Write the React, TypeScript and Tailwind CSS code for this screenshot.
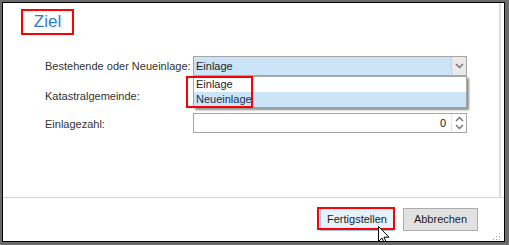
import React from "react";

const Chevron = ({ up = false }: { up?: boolean }) => (
  <svg width="9" height="6" viewBox="0 0 9 6" className="block">
    <path
      d={up ? "M1 5 L4.5 1.5 L8 5" : "M1 1 L4.5 4.5 L8 1"}
      fill="none"
      stroke="#707070"
      strokeWidth="1.4"
    />
  </svg>
);

export default function App() {
  return (
    <div
      className="w-[509px] h-[245px] bg-[#6b6b6b] pt-[2px] pl-[2px] pr-[4px] pb-[3px]"
      style={{ fontFamily: '"Liberation Sans", Arial, sans-serif' }}
    >
      <div className="relative h-full border border-black bg-white flex flex-col overflow-hidden">
        {/* top section */}
        <div className="relative h-[194px] mr-[3px] border-r-2 border-[#dedede]">
          <div className="ml-[18px] mt-[6px] w-[53px] h-[26px] border-2 border-[#ff0000] flex items-center justify-center">
            <span className="text-[17px] leading-none text-[#2d80c4] pb-[1px]">Ziel</span>
          </div>

          {/* form */}
          <div className="relative mt-[21px] ml-[42px] text-[11px] text-[#333]">
            {/* row 1 */}
            <div className="flex items-center h-[20px]">
              <div className="w-[148px]">Bestehende oder Neueinlage:</div>
              <div className="w-[274px] h-[20px] border border-[#a6a6a6] bg-[#cce4f7] flex">
                <div className="flex-1 pl-[2px] flex items-center text-[#1e1e1e]">Einlage</div>
                <div className="w-[15px] bg-[#e9e9e9] border-l border-[#cfcfcf] flex items-center justify-center">
                  <Chevron />
                </div>
              </div>
            </div>
            {/* row 2 */}
            <div className="flex items-center h-[20px] mt-[10px]">
              <div className="w-[148px]">Katastralgemeinde:</div>
              <div className="w-[274px] h-[20px] border border-[#a6a6a6] bg-white" />
            </div>
            {/* row 3 */}
            <div className="flex items-center h-[20px] mt-[7px]">
              <div className="w-[148px] pt-[2px]">Einlagezahl:</div>
              <div className="w-[274px] h-[20px] border border-[#a6a6a6] bg-white flex">
                <div className="flex-1 flex items-center justify-end pr-[5px] text-[#222]">0</div>
                <div className="w-[15px] border-l border-[#e3e3e3] flex flex-col items-center justify-center gap-[2px]">
                  <Chevron up />
                  <Chevron />
                </div>
              </div>
            </div>

            {/* dropdown list */}
            <div className="absolute left-[148px] top-[20px] w-[274px] border border-[#a6a6a6] bg-white shadow-[2px_2px_2px_rgba(0,0,0,0.45)]">
              <div className="h-[15px] pl-[2px] flex items-center text-[#1e1e1e]">Einlage</div>
              <div className="h-[15px] pl-[2px] flex items-center bg-[#cce4f7] text-[#1b2f55]">Neueinlage</div>
            </div>
            {/* red highlight around items */}
            <div className="absolute left-[141px] top-[20px] w-[67px] h-[32px] border-2 border-[#ff0000]" />
          </div>
        </div>

        {/* bottom section */}
        <div className="relative flex-1 border-t border-[#d4d4d4] flex justify-end items-start pt-[9px] pr-[26px] gap-[9px] text-[11px] text-[#1e1e1e]">
          <div className="relative w-[74px] h-[23px] mt-[1px] border border-[#9fc5ea] bg-[#e5f1fb] flex items-center justify-center">
            Fertigstellen
            <div className="absolute -left-[4px] -top-[2px] w-[78px] h-[23px] border-2 border-[#ff0000]" />
          </div>
          <div className="w-[75px] h-[23px] mt-[1px] border border-[#adadad] bg-[#e1e1e1] flex items-center justify-center">
            Abbrechen
          </div>

          {/* mouse cursor */}
          <svg
            width="13"
            height="19"
            viewBox="0 0 13 19"
            className="absolute left-[375px] top-[28px]"
          >
            <path
              d="M0.5 0.5 L0.5 15.5 L4 12 L6.5 17.5 L8.5 16.5 L6 11.2 L11 11.2 Z"
              fill="white"
              stroke="black"
              strokeWidth="1"
            />
          </svg>

          {/* grip */}
          <svg width="9" height="9" viewBox="0 0 9 9" className="absolute right-[3px] bottom-[0px]">
            {[
              [7, 1],
              [4, 4],
              [7, 4],
              [1, 7],
              [4, 7],
              [7, 7],
            ].map(([x, y], i) => (
              <rect key={i} x={x} y={y} width="1" height="1" fill="#a0a0a0" />
            ))}
          </svg>
        </div>
      </div>
    </div>
  );
}
